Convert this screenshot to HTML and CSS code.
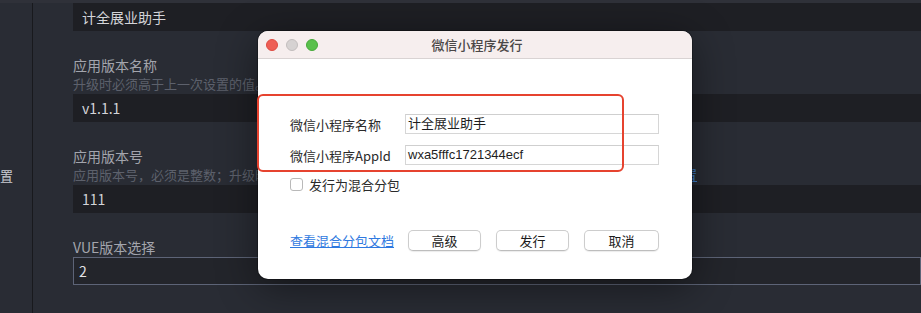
FILE: index.html
```html
<!DOCTYPE html>
<html lang="zh">
<head>
<meta charset="utf-8">
<link rel="stylesheet" href="styles.css">
</head>
<body>
<div class="page">
  <aside class="sidebar">
    <div class="side-item">置</div>
  </aside>
  <main class="main">
    <div class="input">计全展业助手</div>

    <div class="label">应用版本名称</div>
    <div class="hint">升级时必须高于上一次设置的值。</div>
    <div class="input">v1.1.1</div>

    <div class="label">应用版本号</div>
    <div class="hint">应用版本号，必须是整数；升级时必须高于上一次设置的值。安卓平台会作为版本号，苹果会作为构建号<a class="hint-link">配置</a></div>
    <div class="input">111</div>

    <div class="label">VUE版本选择</div>
    <div class="input input-bordered">2</div>
  </main>
</div>

<div class="dialog">
  <div class="titlebar">
    <div class="lights">
      <span class="light red"></span>
      <span class="light gray"></span>
      <span class="light green"></span>
    </div>
    <div class="title">微信小程序发行</div>
  </div>
  <div class="dialog-body">
    <div class="form-row">
      <span class="form-label">微信小程序名称</span>
      <div class="form-input">计全展业助手</div>
    </div>
    <div class="form-row">
      <span class="form-label">微信小程序AppId</span>
      <div class="form-input">wxa5fffc1721344ecf</div>
    </div>
    <label class="check-row">
      <span class="checkbox"></span>
      <span>发行为混合分包</span>
    </label>
    <div class="actions">
      <a class="doc-link">查看混合分包文档</a>
      <button class="btn btn-adv">高级</button>
      <button class="btn btn-pub">发行</button>
      <button class="btn btn-cancel">取消</button>
    </div>
  </div>
</div>

<div class="highlight"></div>
</body>
</html>
```

FILE: styles.css
```css
html, body {
  margin: 0;
  padding: 0;
  width: 921px;
  height: 313px;
  overflow: hidden;
  background: #292c34;
  font-family: "Noto Sans CJK SC", "Noto Sans", sans-serif;
}

.page {
  display: flex;
  height: 313px;
  border-top: 3px solid #2f3139;
  box-sizing: border-box;
}

.sidebar {
  width: 32px;
  flex: none;
  border-right: 1px solid #18191d;
  overflow: hidden;
  display: flex;
  flex-direction: column;
}

.side-item {
  padding-top: 163px;
  font-size: 13px;
  line-height: 20px;
  color: #c9cbd2;
}

.main {
  flex: 1;
  padding-left: 40px;
  display: flex;
  flex-direction: column;
  min-width: 0;
}

.input {
  height: 28px;
  line-height: 28px;
  background: #1e1f24;
  color: #d4d5d9;
  font-size: 14px;
  padding-left: 9px;
  box-sizing: border-box;
  white-space: nowrap;
}

.input-bordered {
  border: 1px solid #5d6477;
  background: #23252b;
  line-height: 26px;
  padding-left: 5px;
  color: #e2e3e6;
}

.label {
  margin-top: 24px;
  font-size: 14px;
  line-height: 20px;
  color: #a3a5ad;
  white-space: nowrap;
}

.hint {
  font-size: 13px;
  line-height: 18px;
  color: #5d616c;
  white-space: nowrap;
  margin-bottom: 1px;
}

.hint-link {
  color: #3f7fc9;
  text-decoration: underline;
}

/* dialog */
.dialog {
  position: absolute;
  left: 258px;
  top: 31px;
  width: 434px;
  height: 248px;
  background: #ffffff;
  border-radius: 10px;
  overflow: hidden;
  box-shadow: 0 8px 40px rgba(0, 0, 0, 0.45), 0 0 0 1px rgba(0, 0, 0, 0.25);
  font-family: "Noto Sans CJK SC", "Liberation Sans", sans-serif;
}

.titlebar {
  height: 28px;
  background: #f6eeee;
  border-bottom: 1px solid #d9d3d3;
  box-sizing: border-box;
  display: flex;
  align-items: center;
}

.lights {
  display: flex;
  gap: 8px;
  padding-left: 8px;
}

.light {
  width: 12px;
  height: 12px;
  border-radius: 50%;
  box-sizing: border-box;
}

.red { background: #ee5f56; border: 1px solid #dd4c43; }
.gray { background: #d6d2d2; border: 1px solid #c2bdbd; }
.green { background: #5ac04c; border: 1px solid #47a93a; }

.title {
  flex: 1;
  text-align: center;
  font-size: 13px;
  color: #4a4747;
  margin-right: 56px;
  font-weight: 500;
}

.dialog-body {
  padding: 55px 32px 0 32px;
  display: flex;
  flex-direction: column;
}

.form-row {
  display: flex;
  align-items: center;
  height: 20px;
  margin-bottom: 11px;
}

.form-label {
  width: 115px;
  flex: none;
  font-size: 13px;
  color: #2a2a2a;
  white-space: nowrap;
}

.form-input {
  width: 254px;
  height: 20px;
  box-sizing: border-box;
  border: 1px solid #d6d6d6;
  border-top-color: #cfcfcf;
  font-size: 13px;
  line-height: 18px;
  padding-left: 2px;
  color: #1e1e1e;
  font-family: "Liberation Sans", "Noto Sans CJK SC", sans-serif;
}

.check-row {
  display: flex;
  align-items: center;
  gap: 6px;
  height: 14px;
  margin-top: 1px;
  font-size: 13px;
  color: #2a2a2a;
}

.checkbox {
  width: 13px;
  height: 13px;
  box-sizing: border-box;
  border: 1px solid #b9b9b9;
  border-radius: 3px;
  background: #fff;
}

.actions {
  display: flex;
  align-items: center;
  margin-top: 39px;
  height: 21px;
}

.doc-link {
  font-size: 13px;
  color: #2f79e0;
  text-decoration: underline;
  width: 118px;
  flex: none;
  white-space: nowrap;
}

.btn {
  height: 21px;
  box-sizing: border-box;
  border: 1px solid #cdcdcd;
  border-bottom-color: #bdbdbd;
  border-radius: 5px;
  background: #ffffff;
  box-shadow: 0 1px 1px rgba(0, 0, 0, 0.08);
  font-family: "Noto Sans CJK SC", sans-serif;
  font-size: 13px;
  color: #1c1c1c;
  padding: 0;
  line-height: 19px;
}

.btn-adv { width: 73px; }
.btn-pub { width: 73px; margin-left: 15px; }
.btn-cancel { width: 75px; margin-left: 15px; }

.highlight {
  position: absolute;
  left: 257px;
  top: 94px;
  width: 367px;
  height: 78px;
  box-sizing: border-box;
  border: 2px solid #e6432f;
  border-radius: 6px;
}
```
